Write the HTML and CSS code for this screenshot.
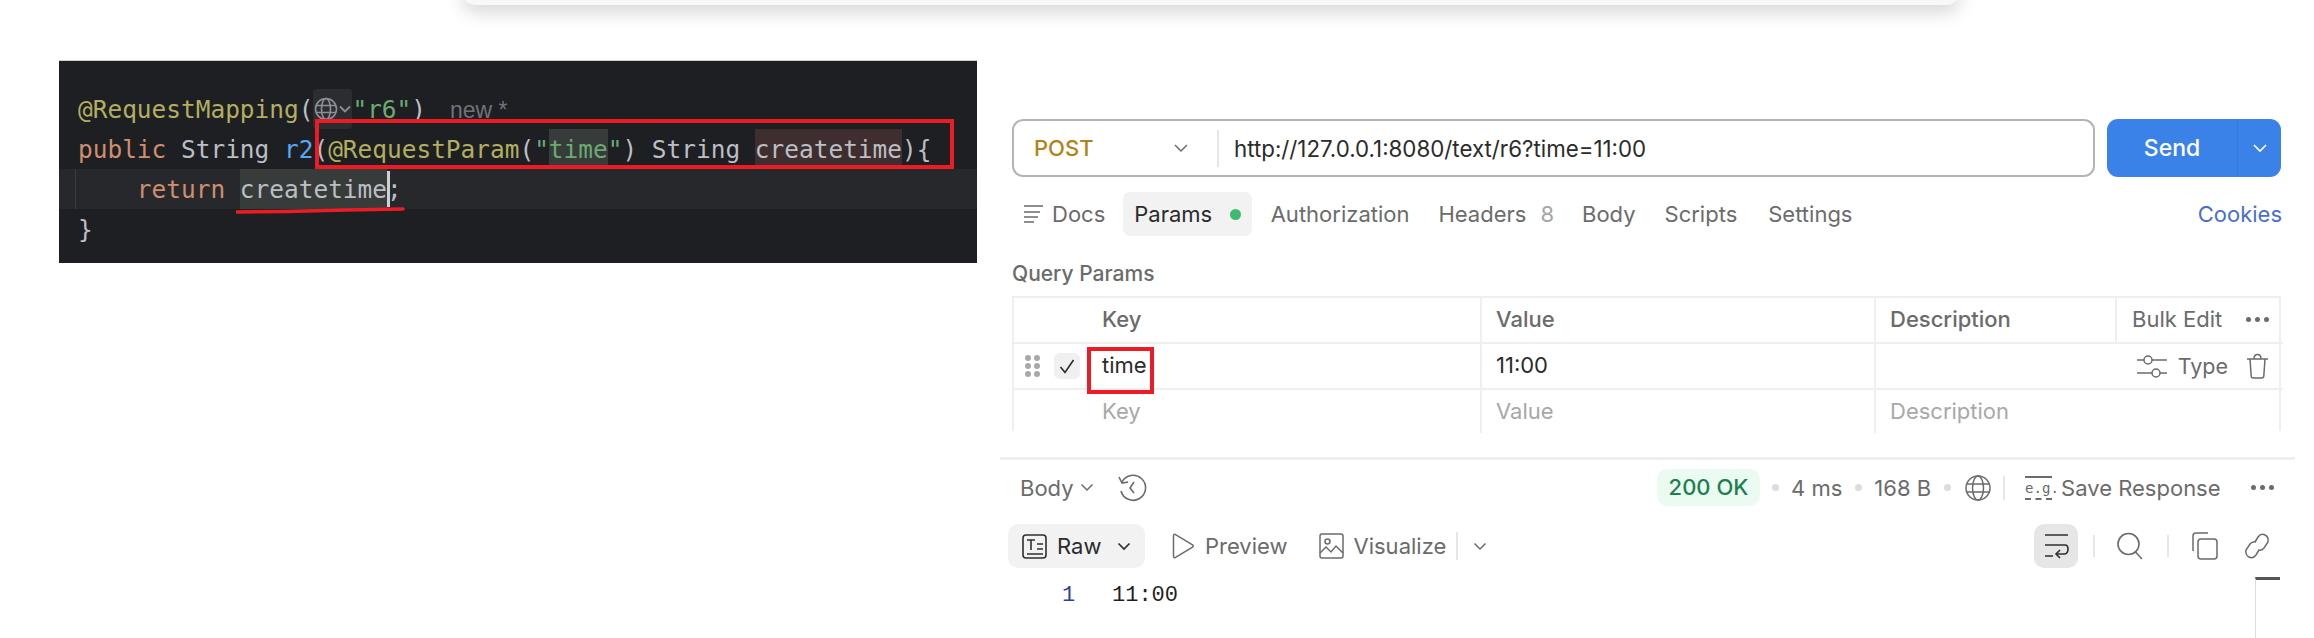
FILE: index.html
```html
<!DOCTYPE html>
<html lang="en">
<head>
<meta charset="utf-8">
<title>Request mapping and Postman</title>
<link rel="stylesheet" href="styles.css">
</head>
<body>
<div class="page">
  <div class="top-card"></div>
  <div class="columns">
    <section class="editor">
      <div class="code-line"><span class="ann">@RequestMapping</span><span class="df">(</span><span class="inlay"><svg width="39" height="40" viewBox="0 0 39 40" fill="none" stroke="#8c8f96" stroke-width="1.6"><circle cx="13" cy="20" r="10.500"/><ellipse cx="13" cy="20" rx="4.500" ry="10.500"/><path d="M3 16.500h20M3 23.500h20"/><path d="M27 17.500l5 5 5-5" stroke-width="1.800"/></svg></span><span class="str">"r6"</span><span class="df">)</span><span class="hint">new *</span></div>
      <div class="code-line"><span class="kw">public</span> <span class="df">String</span> <span class="fn">r2</span><span class="df">(</span><span class="ann">@RequestParam</span><span class="df">(</span><span class="str">"</span><span class="str mark-ok">time</span><span class="str">"</span><span class="df">) String </span><span class="df mark-warn">createtime</span><span class="df">){</span></div>
      <div class="code-line current"><span class="guide"></span><span class="df">    </span><span class="kw">return</span> <span class="df mark-read">createtime</span><span class="caret"></span><span class="df">;</span></div>
      <div class="code-line"><span class="df">}</span></div>
      <div class="red-box signature"></div>
      <svg class="red-underline" width="170" height="8" viewBox="0 0 170 8"><path d="M1 5 L50 4.500 L110 3 L167 2" fill="none" stroke="#ed1c24" stroke-width="3.500" stroke-linecap="round"/></svg>
    </section>

    <section class="pane">
      <div class="send-row">
        <div class="url-box">
          <div class="method"><span>POST</span><svg class="chev" width="16" height="10" viewBox="0 0 16 10" fill="none" stroke="#6b6b6b" stroke-width="1.500"><path d="M2 2l6 6 6-6"/></svg></div>
          <div class="url-sep"></div>
          <div class="url">http://127.0.0.1:8080/text/r6?time=11:00</div>
        </div>
        <div class="send"><span class="send-label">Send</span><span class="send-more"><svg width="16" height="10" viewBox="0 0 16 10" fill="none" stroke="#fff" stroke-width="1.600"><path d="M2 2l6 6 6-6"/></svg></span></div>
      </div>

      <nav class="tabs">
        <span class="tab docs"><svg width="19" height="20" viewBox="0 0 19 20" fill="none" stroke="#6b6b6b" stroke-width="1.600"><path d="M0 2h19M0 8h16M0 13h14M0 18h10"/></svg>Docs</span>
        <span class="tab active">Params<i class="dot"></i></span>
        <span class="tab auth">Authorization</span>
        <span class="tab g-headers">Headers</span><span class="count">8</span>
        <span class="tab g-body">Body</span>
        <span class="tab g-scripts">Scripts</span>
        <span class="tab g-settings">Settings</span>
        <span class="cookies">Cookies</span>
      </nav>

      <h2 class="query-title">Query Params</h2>

      <div class="params">
        <div class="cell head first">Key</div>
        <div class="cell head">Value</div>
        <div class="cell head strong">Description</div>
        <div class="cell head bulk"><span>Bulk Edit</span><span class="more"><i></i><i></i><i></i></span></div>

        <div class="cell first row">
          <span class="grip"><i></i><i></i><i></i><i></i><i></i><i></i></span>
          <span class="check"><svg width="16" height="15" viewBox="0 0 16 15" fill="none" stroke="#2b2b2b" stroke-width="1.600"><path d="M1.500 8l4.500 5.500L14.500 1"/></svg></span>
          <span class="key-text">time<span class="red-box key-box"></span></span>
        </div>
        <div class="cell value">11:00</div>
        <div class="cell wide actions">
          <svg width="30" height="26" viewBox="0 0 30 26" fill="none" stroke="#6b6b6b" stroke-width="1.500"><path d="M0 7h7M15 7h15M0 20h15M23 20h7"/><circle cx="11" cy="7" r="4"/><circle cx="19" cy="20" r="4"/></svg>
          <span class="type">Type</span>
          <svg class="trash" width="21" height="26" viewBox="0 0 21 26" fill="none" stroke="#6b6b6b" stroke-width="1.500"><path d="M0 6h21M7 6c0-6 7-6 7 0M3 6l1.200 17q.2 2 2 2h8.600q1.800 0 2-2L18 6"/></svg>
        </div>

        <div class="cell first ghost">Key</div>
        <div class="cell ghost">Value</div>
        <div class="cell wide ghost">Description</div>
      </div>

      <div class="divider"></div>

      <div class="res-row">
        <span class="body-label">Body</span>
        <svg class="chev-small" width="14" height="9" viewBox="0 0 14 9" fill="none" stroke="#6b6b6b" stroke-width="1.500"><path d="M1.500 1.500L7 7l5.500-5.500"/></svg>
        <svg class="history" width="30" height="28" viewBox="0 0 30 28" fill="none" stroke="#6b6b6b" stroke-width="1.600"><path d="M5 8a12.500 12.500 0 1 1-1 9"/><path d="M2 3l3 6 6-1"/><path d="M17 8l-4 6 4 5"/></svg>
        <span class="status">200 OK</span>
        <i class="sep-dot"></i><span class="metric">4 ms</span>
        <i class="sep-dot"></i><span class="metric">168 B</span>
        <i class="sep-dot"></i>
        <svg class="globe" width="26" height="26" viewBox="0 0 26 26" fill="none" stroke="#6b6b6b" stroke-width="1.500"><circle cx="13" cy="13" r="12"/><ellipse cx="13" cy="13" rx="5.500" ry="12"/><path d="M2 9h22M2 17h22"/></svg>
        <i class="v-sep save-sep"></i>
        <span class="eg">e.g.</span>
        <span class="save">Save Response</span>
        <span class="more res-more"><i></i><i></i><i></i></span>
      </div>

      <div class="view-row">
        <span class="raw">
          <svg width="25" height="25" viewBox="0 0 25 25" fill="none" stroke="#2f2f2f" stroke-width="1.600"><rect x="1" y="1" width="23" height="23" rx="3"/><path d="M5 6h8M9 6v10M15 10h6M15 15h6M5 20h16"/></svg>
          <span>Raw</span>
          <svg width="14" height="9" viewBox="0 0 14 9" fill="none" stroke="#2f2f2f" stroke-width="1.700"><path d="M1.500 1.500L7 7l5.500-5.500"/></svg>
        </span>
        <svg class="preview-icon" width="23" height="26" viewBox="0 0 23 26" fill="none" stroke="#6b6b6b" stroke-width="1.500"><path d="M1.500 3q0-2.500 2.500-1.200l16.500 10q1.500 1.200 0 2.400L4 24.200Q1.500 25.500 1.500 23z"/></svg>
        <span class="view-text">Preview</span>
        <svg class="vis-icon" width="25" height="26" viewBox="0 0 25 26" fill="none" stroke="#6b6b6b" stroke-width="1.500"><rect x="1" y="1" width="23" height="24" rx="2"/><circle cx="8.500" cy="8.500" r="2.500"/><path d="M1 20l6-6 5 5 5-6 7 7"/></svg>
        <span class="view-text">Visualize</span>
        <i class="v-sep vis-sep"></i>
        <svg class="vis-chev" width="14" height="9" viewBox="0 0 14 9" fill="none" stroke="#6b6b6b" stroke-width="1.500"><path d="M1.500 1.500L7 7l5.500-5.500"/></svg>
        <span class="wrap"><svg width="26" height="26" viewBox="0 0 26 26" fill="none" stroke="#2f2f2f" stroke-width="1.600"><path d="M2 2h23M2 12h20q3 0 3 4t-3 5h-8M2 23h8"/><path d="M17 17l-4 4 4 4"/></svg></span>
        <i class="v-sep s1"></i>
        <svg class="search" width="26" height="28" viewBox="0 0 26 28" fill="none" stroke="#6b6b6b" stroke-width="1.600"><circle cx="11.500" cy="12" r="10.500"/><path d="M18.500 20l6.500 7"/></svg>
        <i class="v-sep s2"></i>
        <svg class="copy" width="26" height="28" viewBox="0 0 26 28" fill="none" stroke="#6b6b6b" stroke-width="1.500"><rect x="6" y="7" width="19" height="20" rx="3"/><path d="M1 19V4q0-3 3-3h12"/></svg>
        <svg class="link" width="26" height="28" viewBox="0 0 26 28" fill="none" stroke="#6b6b6b" stroke-width="1.500"><path d="M11 10l3-5q3-4 7-2t3 7l-4 6q-2.500 3-6 2"/><path d="M15 18l-3 5q-3 4-7 2t-3-7l4-6q2.500-3 6-2"/></svg>
      </div>

      <div class="output">
        <span class="ln">1</span><span class="out">11:00</span>
        <div class="fold"></div>
      </div>
    </section>
  </div>
</div>
</body>
</html>
```
FILE: styles.css
```css
* { box-sizing: border-box; }
html, body { margin: 0; padding: 0; background: #fff; }
body { width: 2314px; height: 638px; overflow: hidden; font-family: Inter, "Noto Sans", sans-serif; }
.page { width: 2314px; height: 638px; overflow: hidden; }
.top-card { width: 1498px; height: 20px; margin: -15px 0 0 462px; background: #f8f8f8; border-radius: 0 0 14px 14px; box-shadow: 0 7px 18px rgba(0,0,0,.17); }
.columns { display: flex; align-items: flex-start; }

/* editor */
.editor { position: relative; width: 918px; height: 203px; margin: 55px 0 0 59px; padding: 28px 0 0; background: #1e1f22; border-top: 1px solid #cfcfcf; color: #bcbec4; font: 24.45px/42px "DejaVu Sans Mono", "Liberation Mono", monospace; }
.code-line { position: relative; height: 40px; padding-left: 19px; white-space: pre; }
.current { background: #26282c; }
.ann { color: #b3ae60; }
.df { color: #bcbec4; }
.str { color: #6aab73; }
.kw { color: #cf8e6d; }
.fn { color: #56a8f5; }
.inlay { display: inline-block; width: 39px; height: 40px; vertical-align: top; background: #2b2d30; border-radius: 4px; }
.inlay svg { display: block; }
.hint { margin-left: 24px; color: #6f737a; font: 23px/42px "Liberation Sans", sans-serif; }
.mark-ok { display: inline-block; height: 40px; vertical-align: top; background: #373b39; box-shadow: inset 0 -4px 0 #55585a; }
.mark-warn { position: relative; display: inline-block; height: 40px; vertical-align: top; background: #3f2e2f; }
.mark-warn::after { content: ""; position: absolute; left: 0; right: 0; bottom: 0; border-bottom: 2px dotted #8a7a70; }
.mark-read { display: inline-block; height: 40px; vertical-align: top; background: #373b39; }
.caret { display: inline-block; width: 3px; height: 36px; margin: 2px -3px 0 0; vertical-align: top; background: #ced0d6; }
.guide { position: absolute; left: 16px; top: 0; width: 1px; height: 40px; background: #393b40; }
.red-box { position: absolute; border: 4px solid #ed1c24; pointer-events: none; }
.signature { left: 256px; top: 58px; width: 639px; height: 50px; }
.red-underline { position: absolute; left: 177px; top: 146px; }

/* pane */
.pane { width: 1295px; margin: 114px 0 0 23px; font-size: 22px; color: #6b6b6b; }
.send-row { display: flex; gap: 12px; margin-left: 12px; }
.url-box { display: flex; align-items: center; width: 1083px; height: 58px; border: 2px solid #b4b4b4; border-radius: 11px; }
.method { display: flex; align-items: center; width: 203px; padding-left: 20px; color: #b0841a; font-weight: 500; }
.chev { margin-left: 79px; }
.url-sep { width: 2px; height: 37px; background: #e6e6e6; }
.url { margin-left: 15px; color: #2b2b2b; font-size: 22.3px; }
.send { display: flex; align-items: center; width: 174px; height: 58px; background: #3b82e8; border-radius: 11px; color: #fff; font-weight: 500; font-size: 23px; }
.send-label { width: 130px; text-align: center; }
.send-more { display: flex; align-items: center; justify-content: center; width: 44px; height: 58px; border-left: 1px solid #3578d8; }

.tabs { display: flex; align-items: center; height: 44px; margin: 15px 0 0 12px; width: 1270px; }
.tab { display: flex; align-items: center; height: 44px; white-space: nowrap; }
.docs { margin-left: 12px; gap: 9px; }
.active { margin-left: 18px; padding: 0 11px; background: #f2f2f2; border-radius: 7px; color: #2b2b2b; }
.dot { width: 11px; height: 11px; margin-left: 18px; border-radius: 50%; background: #3dba6f; }
.auth { margin-left: 18.5px; }
.g-headers { margin-left: 29px; }
.count { margin-left: 14px; color: #a6a6a6; }
.g-body { margin-left: 28px; }
.g-scripts { margin-left: 29px; }
.g-settings { margin-left: 31px; }
.cookies { margin-left: auto; color: #4a6fc9; }

.query-title { height: 30px; margin: 23px 0 7px 12px; font-size: 21px; line-height: 30px; font-weight: 500; color: #6b6b6b; }

.params { display: grid; grid-template-columns: 468px 394px 241px 166px; grid-template-rows: 46px 46px 43px; margin-left: 12px; width: 1269px; height: 135px; border-top: 2px solid #efefef; border-right: 2px solid #efefef; border-left: 2px solid #efefef; }
.cell { display: flex; align-items: center; padding: 0 0 2px 14px; border-right: 2px solid #efefef; border-bottom: 2px solid #efefef; color: #2b2b2b; }
.first { padding-left: 88px; }
.head { color: #6b6b6b; font-weight: 500; }
.strong { font-weight: 500; }
.bulk { justify-content: space-between; padding: 0 14px 2px 15px; border-right: 0; font-weight: 400; }
.wide { grid-column: span 2; border-right: 0; }
.row { padding: 0 0 0 11px; }
.grip { display: grid; grid-template-columns: 6px 6px; gap: 2px 3px; width: 15px; }
.grip i { width: 6px; height: 6px; border-radius: 50%; background: #a9a9a9; }
.check { display: flex; align-items: center; justify-content: center; width: 26px; height: 26px; margin-left: 14px; background: #f0f0f0; border-radius: 6px; }
.key-text { position: relative; margin-left: 22px; top: -1px; }
.key-box { left: -15px; top: -5px; width: 67px; height: 47px; }
.ghost { color: #a8a8a8; border-bottom: 0; }
.actions { justify-content: flex-end; padding: 0 15px 0 0; color: #6b6b6b; }
.type { margin-left: 11px; font-size: 21.5px; }
.trash { margin-left: 19px; }
.more { display: inline-flex; gap: 4px; }
.more i { width: 5px; height: 5px; border-radius: 50%; background: #6b6b6b; }

.divider { height: 3px; margin-top: 26px; background: #efefef; }

.res-row { display: flex; align-items: center; height: 37px; margin-top: 9px; padding-left: 20px; }
.body-label { width: 52px; }
.chev-small { margin-left: 8px; }
.history { margin-left: 23px; }
.status { margin-left: 510px; width: 103px; height: 37px; line-height: 37px; text-align: center; background: #ecfbf2; color: #1c7f4e; border-radius: 10px; font-weight: 500; }
.sep-dot { width: 7px; height: 7px; margin: 0 12px; border-radius: 50%; background: #dcdcdc; }
.metric { margin-right: 1px; white-space: nowrap; }
.globe { margin-left: 2px; }
.v-sep { width: 2px; background: #e6e6e6; }
.save-sep { height: 24px; margin-left: 12px; }
.eg { width: 27px; margin-left: 20px; font: 14px/20px "DejaVu Sans Mono", monospace; text-align: center; border-top: 2px solid #6b6b6b; border-bottom: 2px dashed #6b6b6b; }
.save { margin-left: 9px; white-space: nowrap; }
.res-more { margin-left: 30px; }

.view-row { display: flex; align-items: center; height: 44px; margin-top: 18px; padding-left: 8px; }
.raw { display: flex; align-items: center; width: 137px; height: 44px; padding-left: 14px; background: #f2f2f2; border-radius: 10px; color: #2b2b2b; }
.raw span { margin: 0 14px 0 10px; width: 46px; }
.preview-icon { margin-left: 27px; }
.view-text { margin-left: 10px; white-space: nowrap; }
.vis-icon { margin-left: 31px; }
.vis-sep { height: 28px; margin-left: 10px; }
.vis-chev { margin-left: 15px; }
.wrap { display: flex; align-items: center; justify-content: center; width: 44px; height: 44px; margin-left: 547px; background: #e6e6e6; border-radius: 10px; }
.s1 { height: 22px; margin-left: 15px; }
.search { margin-left: 22px; }
.s2 { height: 22px; margin-left: 24px; }
.copy { margin-left: 23px; }
.link { margin-left: 26px; }

.output { position: relative; display: flex; align-items: center; height: 30px; margin-top: 13px; padding-left: 62px; font: 22px/30px "Liberation Mono", monospace; }
.ln { width: 50px; color: #2a3f9f; }
.out { color: #1f1f1f; }
.fold { position: absolute; left: 1255px; top: -4px; width: 25px; height: 80px; border-top: 3px solid #555; border-left: 1px solid #dcdcdc; }
```
